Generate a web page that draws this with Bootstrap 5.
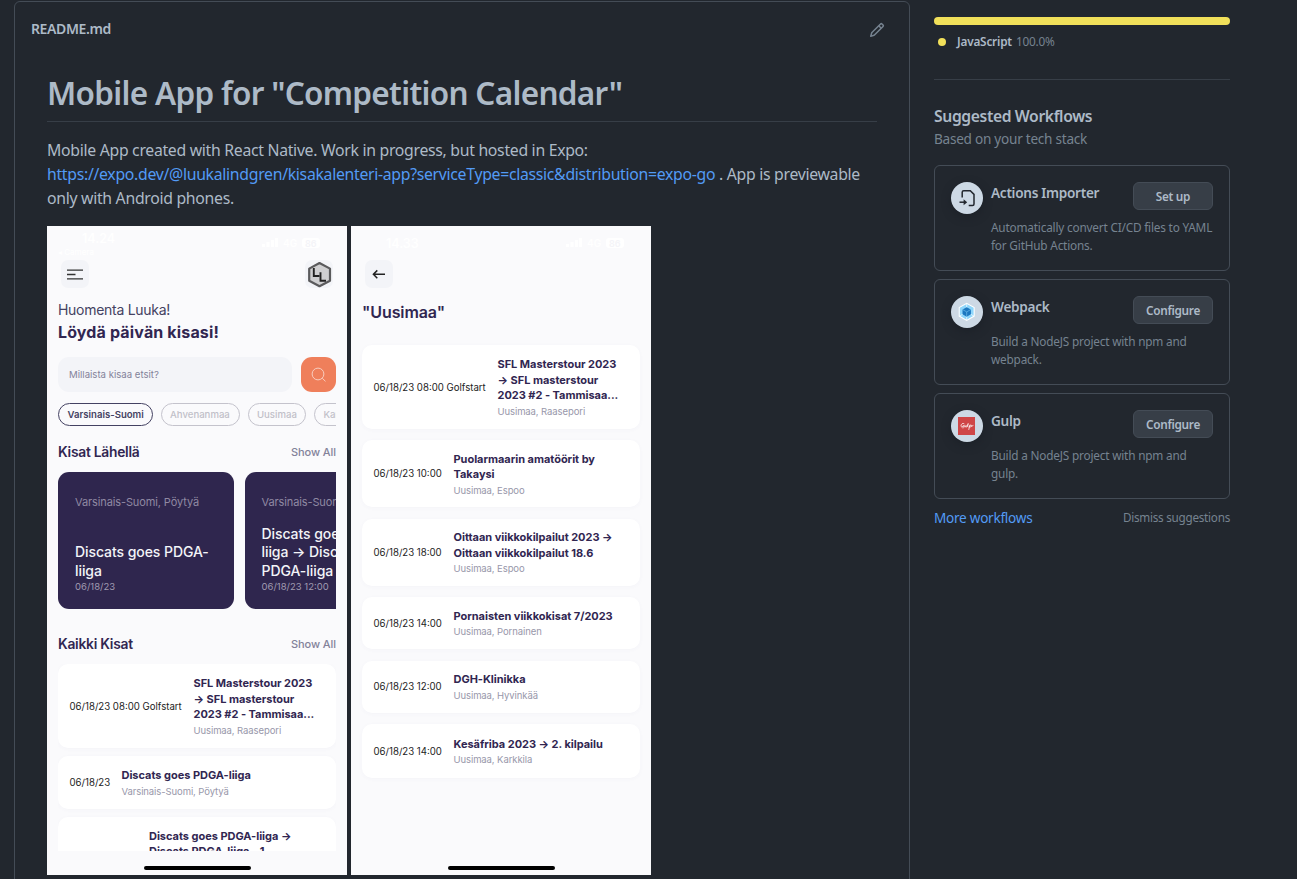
<!DOCTYPE html>
<html lang="en" data-bs-theme="dark">
<head>
<meta charset="utf-8">
<meta name="viewport" content="width=device-width, initial-scale=1">
<title>README.md</title>
<link href="https://cdn.jsdelivr.net/npm/bootstrap@5.3.0/dist/css/bootstrap.min.css" rel="stylesheet">
<style>
  body { background:#22272e; color:#adbac7; font-family:"Noto Sans","Open Sans",sans-serif; font-size:13.6px; line-height:1.5; height:879px; overflow:hidden; }
  a { color:#539bf5; text-decoration:none; }
  .page-wrap { padding:1px 67px 0 14px; gap:24px; }
  .readme-box { width:896px; height:900px; border:1px solid #444c56; border-radius:6px; padding:0 32px; }
  .readme-head { height:56px; margin:0 -16px; font-weight:600; font-size:14px; letter-spacing:-.38px; }
  .readme-head span { padding-bottom:3px; }
  .readme-title { font-size:31.5px; font-weight:600; line-height:42px; margin:14px 0 16px; height:50px; border-bottom:1px solid #373e47; letter-spacing:-.7px; color:#adbac7; }
  .readme-text { font-size:15.8px; line-height:24px; margin-bottom:16px; letter-spacing:-.3px; white-space:nowrap; }
  .side-col { width:296px; padding-top:16px; }
  .lang-bar { height:8px; border-radius:6px; background:#f1e05a; }
  .lang-dot { width:8px; height:8px; border-radius:50%; background:#f1e05a; margin:0 11px 0 4px; }
  .lang-row { height:18px; margin-top:8px; }
  .text-sm12 { font-size:11.8px; letter-spacing:-.2px; }
  .foot-dim { font-size:11.7px; letter-spacing:-.25px; }
  .dim { color:#768390; }
  .side-rule { border-top:1px solid #373e47; margin-top:28px; }
  .side-title { font-size:15.7px; font-weight:600; line-height:24px; margin:24px 0 0; color:#adbac7; letter-spacing:-.38px; }
  .side-sub { line-height:21px; letter-spacing:-.26px; margin-bottom:16px; }
  .flow-card { height:106px; border:1px solid #444c56; border-radius:6px; padding:16px; margin-bottom:8px; gap:8px; }
  .flow-icon { width:32px; height:32px; border-radius:50%; background:#cdd9e5; box-shadow:0 3px 8px #1c2128; }
  .flow-name { font-weight:600; line-height:21px; letter-spacing:-.29px; }
  .flow-btn { width:80px; height:28px; font-size:11.8px; font-weight:600; line-height:26px; padding:0; color:#adbac7; background:#373e47; border:1px solid #444c56; border-radius:6px; letter-spacing:-.3px; }
  .flow-desc { font-size:11.8px; letter-spacing:-.19px; line-height:18px; margin-top:8px; white-space:nowrap; }
  .side-foot { padding-top:1px; }
  .more { letter-spacing:-.27px; }

  .phone { width:300px; height:649px; background:#fafafc; color:#312651; font-family:Inter,"Noto Sans",sans-serif; padding:0 11px; overflow:hidden; white-space:nowrap; }
  .status { height:34px; color:#fff; font-size:12.5px; line-height:14px; font-weight:600; padding:6px 14px 0 24px; }
  .status.low { padding-top:11px; }
  .status-back { font-size:8px; line-height:12px; margin-left:-24px; font-weight:500; }
  .sq { width:28px; height:28px; border-radius:7px; background:#f3f4f8; margin:0 3px; }
  .hello { font-size:14px; line-height:20px; margin-top:12px; color:#444262; letter-spacing:-.28px; }
  .slogan { font-size:16px; font-weight:700; line-height:24px; letter-spacing:.15px; }
  .slogan.place { font-weight:600; letter-spacing:-.1px; margin-top:12px; }
  .seek { height:35px; gap:9px; margin-top:13px; }
  .seek-box { width:234px; background:#f3f4f8; border-radius:11px; padding-left:11px; font-size:9.6px; line-height:35px; color:#83829a; }
  .seek-go { width:35px; background:#ef7f5b; border-radius:11px; }
  .pills { margin-top:11px; gap:8px; overflow:hidden; height:23px; }
  .pill { flex:none; height:23px; border:1px solid #c4c3cc; border-radius:12px; font-size:9.6px; font-weight:500; line-height:21px; padding-left:8.5px; color:#c1c0c8; }
  .pill.on { border-color:#444262; color:#444262; font-weight:600; }
  .p-a{width:94.5px}.p-b{width:79px}.p-c{width:58.5px}.p-d{width:90px}
  .sec { height:20px; font-size:13.8px; font-weight:600; letter-spacing:-.25px; line-height:18px; }
  .sec.near-head { margin:16px 0 10px; }
  .sec.all-head { margin:25px 0 10px; }
  .sec-more { font-size:11px; font-weight:500; color:#83829a; letter-spacing:-.07px; }
  .near { gap:11px; overflow:hidden; height:137px; }
  .near-card { flex:none; width:175.5px; height:137px; border-radius:11px; background:#2f264e; padding:21px 17px 16px; }
  .near-place { font-size:11px; line-height:18px; color:#8f89a3; letter-spacing:-.11px; }
  .near-name { font-size:14px; line-height:18.5px; font-weight:500; color:#f3f4f8; margin-top:auto; letter-spacing:-.07px; }
  .near-date { font-size:9.5px; line-height:13px; color:#a09bb1; }
  .all-list { height:187px; }
  .ev { flex:none; border-radius:10px; background:#fff; padding:2px 11.5px 0; gap:11.5px; box-shadow:0 1px 4px rgba(90,90,130,.035); }
  .ev-date { flex:none; font-size:9.65px; color:#222; }
  .ev-name { font-size:11px; font-weight:700; line-height:15.5px; letter-spacing:-.03px; padding-top:1px; }
  .ev-place { font-size:9.5px; line-height:16px; color:#9897aa; letter-spacing:-.09px; }
  .ev-stack { margin-top:21px; gap:11.5px; }
  .home-bar { width:107px; height:4px; border-radius:2px; background:#000; margin-bottom:5px; }
  .h84{height:83.5px}.h67{height:67px}.h52{height:52px}.h53{height:53.5px}
  .w-long{width:112.5px}.w-mid{width:68.5px}.w-short{width:40.5px}.w-wide{width:68px}
</style>
</head>
<body>
<div class="page-wrap d-flex align-items-start">
  <main class="readme-box flex-shrink-0">
    <div class="readme-head d-flex align-items-center justify-content-between">
      <span>README.md</span>
      <svg class="me-2" width="16" height="16" viewBox="0 0 16 16" fill="#768390"><path d="M11.013 1.427a1.75 1.75 0 0 1 2.474 0l1.086 1.086a1.75 1.75 0 0 1 0 2.474l-8.61 8.61c-.21.21-.47.364-.756.445l-3.251.93a.75.75 0 0 1-.927-.928l.929-3.25c.081-.286.235-.547.445-.758l8.61-8.61Zm.176 4.823L9.75 4.81l-6.286 6.287a.253.253 0 0 0-.064.108l-.558 1.953 1.953-.558a.253.253 0 0 0 .108-.064Zm1.238-3.763a.25.25 0 0 0-.354 0L10.811 3.75l1.439 1.44 1.263-1.263a.25.25 0 0 0 0-.354Z"/></svg>
    </div>
    <h1 class="readme-title">Mobile App for "Competition Calendar"</h1>
    <p class="readme-text">Mobile App created with React Native. Work in progress, but hosted in Expo:<br><a href="#">https://expo.dev/@luukalindgren/kisakalenteri-app?serviceType=classic&amp;distribution=expo-go</a> . App is previewable<br>only with Android phones.</p>
    <div class="d-flex gap-1">
      <section class="phone d-flex flex-column">
        <div class="status d-flex justify-content-between flex-shrink-0"><div>14.24<div class="status-back">◂ Camera</div></div>
          <svg width="62" height="18" viewBox="0 -2 62 18" fill="#fff"><path d="M2 10h3v3H2zM6.500 8h3v5h-3zM11 6h3v7h-3zM15 4h3v9h-3z"/><text x="23" y="13" font-size="10">4G</text><rect x="42" y="4" width="18" height="10" rx="3"/><text x="45" y="12.500" font-size="9" fill="#f4f4f8">86</text></svg></div>
        <div class="d-flex justify-content-between">
          <div class="sq"><svg class="d-block" width="28" height="28" stroke="#333" stroke-width="1.3"><path d="M6 10.2h16M6 14.5h8.5M6 18.8h16"/></svg></div>
          <div class="sq"><svg class="d-block" width="28" height="28"><path d="M14.5 3 25 8.6v12.2L14.5 26.2 4.200 20.8V8.6z" fill="#cfcfd1" stroke="#5a5a5c" stroke-width="2.2" stroke-linejoin="round"/><path d="M8.800 8v8h5.500M15.500 12.300v8.500H21" fill="none" stroke="#222" stroke-width="1.900"/></svg></div>
        </div>
        <div class="hello">Huomenta Luuka!</div>
        <div class="slogan">Löydä päivän kisasi!</div>
        <div class="seek d-flex"><div class="seek-box">Millaista kisaa etsit?</div>
          <div class="seek-go"><svg class="d-block" width="35" height="35" fill="none" stroke="#f8cdbf" stroke-width="1"><circle cx="17" cy="17" r="5.9"/><path d="m21.3 21.3 3.2 3"/></svg></div></div>
        <div class="pills d-flex"><div class="pill on p-a">Varsinais-Suomi</div><div class="pill p-b">Ahvenanmaa</div><div class="pill p-c">Uusimaa</div><div class="pill p-d">Kanta-Häme</div></div>
        <div class="sec near-head d-flex justify-content-between align-items-center"><span>Kisat Lähellä</span><span class="sec-more">Show All</span></div>
        <div class="near d-flex flex-shrink-0">
          <div class="near-card d-flex flex-column"><span class="near-place">Varsinais-Suomi, Pöytyä</span><span class="near-name">Discats goes PDGA-<br>liiga</span><span class="near-date">06/18/23</span></div>
          <div class="near-card d-flex flex-column"><span class="near-place">Varsinais-Suomi, Pöytyä</span><span class="near-name">Discats goes PDGA-<br>liiga → Discats<br>PDGA-liiga - 1</span><span class="near-date">06/18/23 12:00</span></div>
        </div>
        <div class="sec all-head d-flex justify-content-between align-items-center"><span>Kaikki Kisat</span><span class="sec-more">Show All</span></div>
        <div class="all-list d-flex flex-column gap-2 overflow-hidden flex-shrink-0">
          <div class="ev h84 d-flex align-items-center"><span class="ev-date w-long">06/18/23 08:00 Golfstart</span><div><div class="ev-name">SFL Masterstour 2023<br>→ SFL masterstour<br>2023 #2 - Tammisaa...</div><div class="ev-place">Uusimaa, Raasepori</div></div></div>
          <div class="ev h53 d-flex align-items-center"><span class="ev-date w-short">06/18/23</span><div><div class="ev-name">Discats goes PDGA-liiga</div><div class="ev-place">Varsinais-Suomi, Pöytyä</div></div></div>
          <div class="ev h67 d-flex align-items-center"><span class="ev-date w-wide"></span><div><div class="ev-name">Discats goes PDGA-liiga →<br>Discats PDGA-liiga - 1</div><div class="ev-place">Varsinais-Suomi</div></div></div>
        </div>
        <div class="home-bar mx-auto mt-auto flex-shrink-0"></div>
      </section>
      <section class="phone d-flex flex-column">
        <div class="status low d-flex justify-content-between flex-shrink-0"><div>14.33</div>
          <svg width="62" height="16" viewBox="0 0 62 16" fill="#fff"><path d="M2 7h3v3H2zM6.500 5h3v5h-3zM11 3h3v7h-3zM15 1h3v9h-3z"/><text x="23" y="10" font-size="10">4G</text><rect x="42" y="1" width="18" height="10" rx="3"/><text x="45" y="9.500" font-size="9" fill="#f4f4f8">86</text></svg></div>
        <div class="sq"><svg class="d-block" width="28" height="28" fill="none" stroke="#222" stroke-width="1.5"><path d="M20 14.300H8.500M12.300 10.400l-3.900 3.900 3.900 3.900"/></svg></div>
        <div class="slogan place">"Uusimaa"</div>
        <div class="ev-stack d-flex flex-column">
          <div class="ev h84 d-flex align-items-center"><span class="ev-date w-long">06/18/23 08:00 Golfstart</span><div><div class="ev-name">SFL Masterstour 2023<br>→ SFL masterstour<br>2023 #2 - Tammisaa...</div><div class="ev-place">Uusimaa, Raasepori</div></div></div>
          <div class="ev h67 d-flex align-items-center"><span class="ev-date w-mid">06/18/23 10:00</span><div><div class="ev-name">Puolarmaarin amatöörit by<br>Takaysi</div><div class="ev-place">Uusimaa, Espoo</div></div></div>
          <div class="ev h67 d-flex align-items-center"><span class="ev-date w-mid">06/18/23 18:00</span><div><div class="ev-name">Oittaan viikkokilpailut 2023 →<br>Oittaan viikkokilpailut 18.6</div><div class="ev-place">Uusimaa, Espoo</div></div></div>
          <div class="ev h52 d-flex align-items-center"><span class="ev-date w-mid">06/18/23 14:00</span><div><div class="ev-name">Pornaisten viikkokisat 7/2023</div><div class="ev-place">Uusimaa, Pornainen</div></div></div>
          <div class="ev h52 d-flex align-items-center"><span class="ev-date w-mid">06/18/23 12:00</span><div><div class="ev-name">DGH-Klinikka</div><div class="ev-place">Uusimaa, Hyvinkää</div></div></div>
          <div class="ev h53 d-flex align-items-center"><span class="ev-date w-mid">06/18/23 14:00</span><div><div class="ev-name">Kesäfriba 2023 → 2. kilpailu</div><div class="ev-place">Uusimaa, Karkkila</div></div></div>
        </div>
        <div class="home-bar mx-auto mt-auto flex-shrink-0"></div>
      </section>
    </div>
  </main>
  <aside class="side-col flex-shrink-0">
    <div class="lang-bar"></div>
    <div class="lang-row text-sm12 d-flex align-items-center"><span class="lang-dot"></span><span class="fw-semibold">JavaScript</span><span class="dim ms-1">100.0%</span></div>
    <div class="side-rule"></div>
    <h2 class="side-title">Suggested Workflows</h2>
    <div class="side-sub dim">Based on your tech stack</div>
    <div class="flow-card d-flex">
      <div class="flow-icon flex-shrink-0"><svg class="d-block" width="32" height="32" fill="none" stroke="#22272e" stroke-width="1.5"><path d="M11.200 15.500V10.200a1.500 1.500 0 0 1 1.500-1.500h6.600l3.700 3.700v9.600a1.500 1.500 0 0 1-1.500 1.500h-3.800"/><path d="M8.500 20.200h5"/><path d="m12.600 17.200 3.600 3-3.600 3z" fill="#22272e" stroke="none"/></svg></div>
      <div class="flex-grow-1"><div class="d-flex justify-content-between"><span class="flow-name">Actions Importer</span><button class="btn flow-btn">Set up</button></div><div class="flow-desc dim">Automatically convert CI/CD files to YAML<br>for GitHub Actions.</div></div>
    </div>
    <div class="flow-card d-flex">
      <div class="flow-icon flex-shrink-0"><svg class="d-block" width="32" height="32"><path d="m15.700 6.700 8 4.500v9.300l-8 4.500-8-4.500v-9.300z" fill="#fff"/><path d="m15.700 7.900 6.900 3.900v8l-6.900 4-6.900-4v-8z" fill="#8ed6fb"/><path d="M15.700 7.500v4M8.500 20.200l3.300-2M22.900 20.200l-3.300-2M15.700 20.500v3.700" stroke="#fff" stroke-width=".7"/><path d="m15.700 11.200 4.200 2.300v4.800l-4.200 2.400-4.200-2.400v-4.800z" fill="#1c78c0"/><path d="m11.500 13.500 4.200 2.400 4.200-2.400M15.700 15.900v4.800" fill="none" stroke="#8ed6fb" stroke-width=".5"/></svg></div>
      <div class="flex-grow-1"><div class="d-flex justify-content-between"><span class="flow-name">Webpack</span><button class="btn flow-btn">Configure</button></div><div class="flow-desc dim">Build a NodeJS project with npm and<br>webpack.</div></div>
    </div>
    <div class="flow-card d-flex">
      <div class="flow-icon flex-shrink-0"><svg class="d-block" width="32" height="32"><path d="M7 7h17v18H7z" fill="#cf4647"/><path d="M13 13.600c-1.300-1-3 .6-3 2.300 0 1.500 1.700 1.500 2.400-.5l-.4 2.600M13.800 15.300c-.5 1.300-.4 2 .3 1.800.5-.1.900-.8 1.100-1.600-.3 1.200-.1 1.700.4 1.500.8-.4 1.500-2 1.600-3.500-.8 1.500-1 3.400-.2 3.500M18.800 15.200l-1 4.300M18.600 16c.8-1.300 2-1.200 1.800-.2-.2.900-1.200 1.500-1.900 1.100M20.400 16.300l1.600-.7" fill="none" stroke="#fff" stroke-width=".75" stroke-linecap="round"/></svg></div>
      <div class="flex-grow-1"><div class="d-flex justify-content-between"><span class="flow-name">Gulp</span><button class="btn flow-btn">Configure</button></div><div class="flow-desc dim">Build a NodeJS project with npm and<br>gulp.</div></div>
    </div>
    <div class="side-foot d-flex justify-content-between align-items-center"><a class="more" href="#">More workflows</a><span class="dim foot-dim">Dismiss suggestions</span></div>
  </aside>
</div>
<script src="https://cdn.jsdelivr.net/npm/bootstrap@5.3.0/dist/js/bootstrap.bundle.min.js"></script>
</body>
</html>
